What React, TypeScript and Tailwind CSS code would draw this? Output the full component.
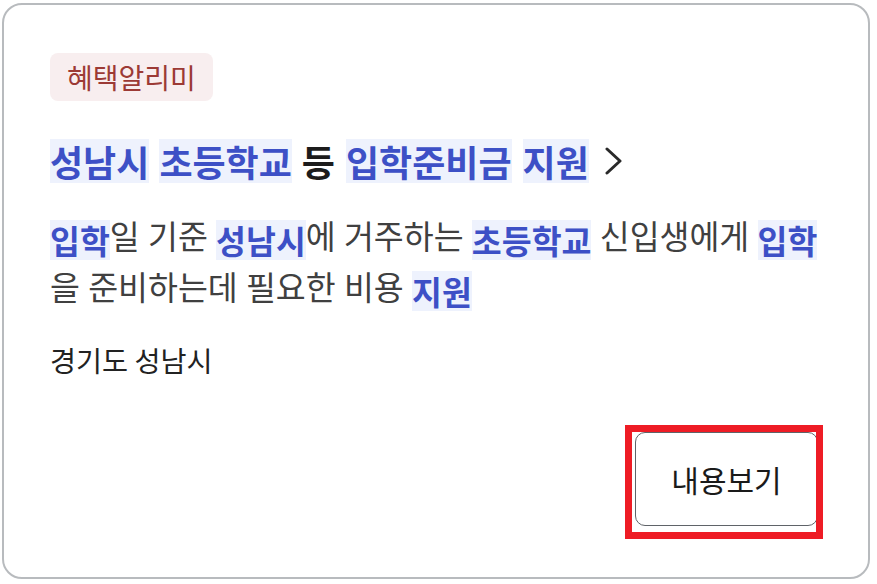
import React from "react";

const F = { fontFamily: '"Noto Sans CJK KR", "Noto Sans", sans-serif' };

function HL({ children, title }: { children: React.ReactNode; title?: boolean }) {
  return (
    <span
      className={
        title
          ? "inline-block bg-[#eef2fd] text-[#3d50c6] font-bold leading-[44px] h-[44px] align-top"
          : "inline-block bg-[#eef2fd] text-[#3d50c6] font-bold leading-[40px] h-[40px] align-middle"
      }
    >
      {children}
    </span>
  );
}

export default function App() {
  return (
    <div className="relative w-[877px] h-[584px] bg-white pl-[2px] pr-[7px] pt-[3px] pb-[5px]" style={F}>
      <div className="h-full border-2 border-[#b8bbbe] rounded-[20px] flex flex-col pl-[46px] pr-[50px] pt-[48px]">
        <div className="self-start h-[48px] px-[17px] rounded-[8px] bg-[#f8eeef] text-[#9c3a35] text-[28px] leading-[48px]">
          혜택알리미
        </div>
        <div className="mt-[38px] h-[44px] flex items-center text-[36px] leading-[44px] text-[#1c1c1c] font-bold whitespace-nowrap">
          <HL title>성남시</HL>
          <span className="w-[10px]" />
          <HL title>초등학교</HL>
          <span className="w-[10px]" />
          <span>등</span>
          <span className="w-[11px]" />
          <HL title>입학준비금</HL>
          <span className="w-[11px]" />
          <HL title>지원</HL>
          <svg className="ml-[16px]" width="17" height="28" viewBox="0 0 17 28" fill="none">
            <polyline points="2,2 15,14 2,26" stroke="#2a2a2a" strokeWidth="3" strokeLinecap="round" strokeLinejoin="round" />
          </svg>
        </div>
        <p className="mt-[26px] text-[32.5px] leading-[51px] text-[#404040] [word-spacing:1px] whitespace-nowrap">
          <HL>입학</HL>일 기준 <HL>성남시</HL>에 거주하는 <HL>초등학교</HL> 신입생에게 <HL>입학</HL>
          <br />을 준비하는데 필요한 비용 <HL>지원</HL>
        </p>
        <div className="mt-[31px] text-[28.3px] leading-[36px] text-[#222222]">경기도 성남시</div>
        <div className="mt-[54px] flex justify-end">
          <button className="w-[183px] h-[94px] border-[1.5px] border-[#5f6368] rounded-[10px] bg-white text-[30px] text-[#1a1a1a]">
            내용보기
          </button>
        </div>
      </div>
      <div className="absolute left-[625px] top-[425px] w-[198px] h-[114px] border-[7px] border-[#ee1c25] pointer-events-none" />
    </div>
  );
}
